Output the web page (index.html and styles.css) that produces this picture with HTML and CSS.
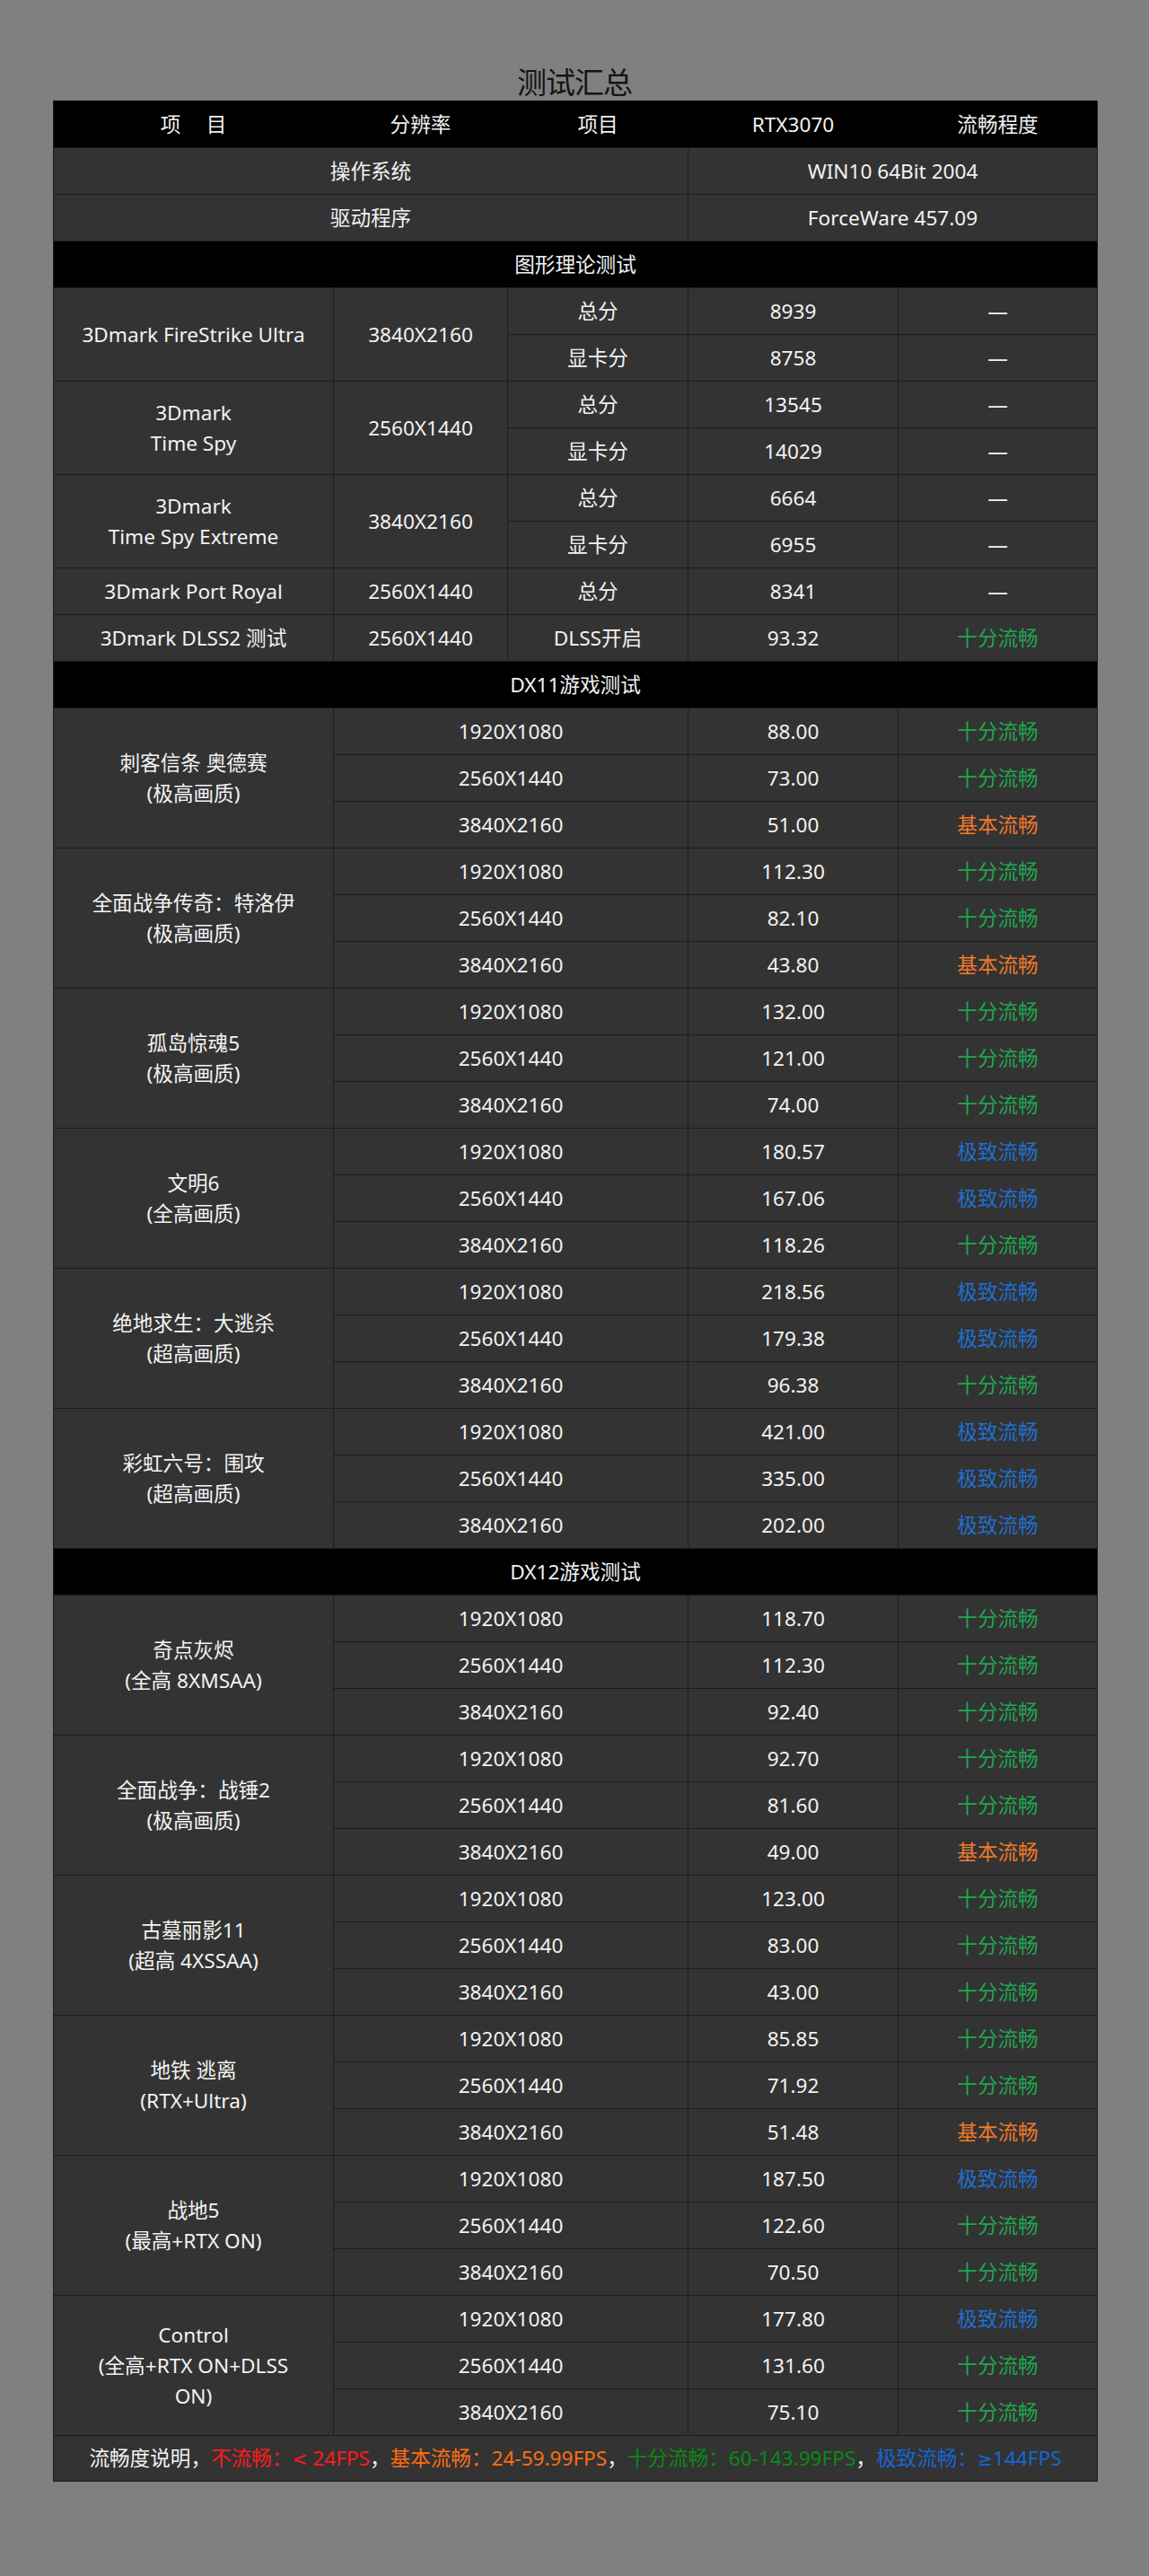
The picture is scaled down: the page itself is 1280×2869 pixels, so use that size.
FILE: index.html
```html
<!DOCTYPE html>
<html lang="zh-CN">
<head>
<meta charset="utf-8">
<title>测试汇总</title>
<link rel="stylesheet" href="styles.css">
</head>
<body>
<div class="page">
  <h1 class="title">测试汇总</h1>
  <table class="summary">
    <colgroup>
      <col class="c1"><col class="c2"><col class="c3"><col class="c4"><col class="c5">
    </colgroup>
    <tbody>
      <tr class="head"><td>项　 目</td><td>分辨率</td><td>项目</td><td>RTX3070</td><td>流畅程度</td></tr>
      <tr><td colspan="3">操作系统</td><td colspan="2">WIN10 64Bit 2004</td></tr>
      <tr><td colspan="3">驱动程序</td><td colspan="2">ForceWare 457.09</td></tr>
      <tr class="section"><td colspan="5">图形理论测试</td></tr>

      <tr><td rowspan="2">3Dmark FireStrike Ultra</td><td rowspan="2">3840X2160</td><td>总分</td><td>8939</td><td>—</td></tr>
      <tr><td>显卡分</td><td>8758</td><td>—</td></tr>
      <tr><td rowspan="2">3Dmark<br>Time Spy</td><td rowspan="2">2560X1440</td><td>总分</td><td>13545</td><td>—</td></tr>
      <tr><td>显卡分</td><td>14029</td><td>—</td></tr>
      <tr><td rowspan="2">3Dmark<br>Time Spy Extreme</td><td rowspan="2">3840X2160</td><td>总分</td><td>6664</td><td>—</td></tr>
      <tr><td>显卡分</td><td>6955</td><td>—</td></tr>
      <tr><td>3Dmark Port Royal</td><td>2560X1440</td><td>总分</td><td>8341</td><td>—</td></tr>
      <tr><td>3Dmark DLSS2 测试</td><td>2560X1440</td><td>DLSS开启</td><td>93.32</td><td class="good">十分流畅</td></tr>

      <tr class="section"><td colspan="5">DX11游戏测试</td></tr>

      <tr><td rowspan="3">刺客信条 奥德赛<br>(极高画质)</td><td colspan="2">1920X1080</td><td>88.00</td><td class="good">十分流畅</td></tr>
      <tr><td colspan="2">2560X1440</td><td>73.00</td><td class="good">十分流畅</td></tr>
      <tr><td colspan="2">3840X2160</td><td>51.00</td><td class="ok">基本流畅</td></tr>

      <tr><td rowspan="3">全面战争传奇：特洛伊<br>(极高画质)</td><td colspan="2">1920X1080</td><td>112.30</td><td class="good">十分流畅</td></tr>
      <tr><td colspan="2">2560X1440</td><td>82.10</td><td class="good">十分流畅</td></tr>
      <tr><td colspan="2">3840X2160</td><td>43.80</td><td class="ok">基本流畅</td></tr>

      <tr><td rowspan="3">孤岛惊魂5<br>(极高画质)</td><td colspan="2">1920X1080</td><td>132.00</td><td class="good">十分流畅</td></tr>
      <tr><td colspan="2">2560X1440</td><td>121.00</td><td class="good">十分流畅</td></tr>
      <tr><td colspan="2">3840X2160</td><td>74.00</td><td class="good">十分流畅</td></tr>

      <tr><td rowspan="3">文明6<br>(全高画质)</td><td colspan="2">1920X1080</td><td>180.57</td><td class="best">极致流畅</td></tr>
      <tr><td colspan="2">2560X1440</td><td>167.06</td><td class="best">极致流畅</td></tr>
      <tr><td colspan="2">3840X2160</td><td>118.26</td><td class="good">十分流畅</td></tr>

      <tr><td rowspan="3">绝地求生：大逃杀<br>(超高画质)</td><td colspan="2">1920X1080</td><td>218.56</td><td class="best">极致流畅</td></tr>
      <tr><td colspan="2">2560X1440</td><td>179.38</td><td class="best">极致流畅</td></tr>
      <tr><td colspan="2">3840X2160</td><td>96.38</td><td class="good">十分流畅</td></tr>

      <tr><td rowspan="3">彩虹六号：围攻<br>(超高画质)</td><td colspan="2">1920X1080</td><td>421.00</td><td class="best">极致流畅</td></tr>
      <tr><td colspan="2">2560X1440</td><td>335.00</td><td class="best">极致流畅</td></tr>
      <tr><td colspan="2">3840X2160</td><td>202.00</td><td class="best">极致流畅</td></tr>

      <tr class="section"><td colspan="5">DX12游戏测试</td></tr>

      <tr><td rowspan="3">奇点灰烬<br>(全高 8XMSAA)</td><td colspan="2">1920X1080</td><td>118.70</td><td class="good">十分流畅</td></tr>
      <tr><td colspan="2">2560X1440</td><td>112.30</td><td class="good">十分流畅</td></tr>
      <tr><td colspan="2">3840X2160</td><td>92.40</td><td class="good">十分流畅</td></tr>

      <tr><td rowspan="3">全面战争：战锤2<br>(极高画质)</td><td colspan="2">1920X1080</td><td>92.70</td><td class="good">十分流畅</td></tr>
      <tr><td colspan="2">2560X1440</td><td>81.60</td><td class="good">十分流畅</td></tr>
      <tr><td colspan="2">3840X2160</td><td>49.00</td><td class="ok">基本流畅</td></tr>

      <tr><td rowspan="3">古墓丽影11<br>(超高 4XSSAA)</td><td colspan="2">1920X1080</td><td>123.00</td><td class="good">十分流畅</td></tr>
      <tr><td colspan="2">2560X1440</td><td>83.00</td><td class="good">十分流畅</td></tr>
      <tr><td colspan="2">3840X2160</td><td>43.00</td><td class="good">十分流畅</td></tr>

      <tr><td rowspan="3">地铁 逃离<br>(RTX+Ultra)</td><td colspan="2">1920X1080</td><td>85.85</td><td class="good">十分流畅</td></tr>
      <tr><td colspan="2">2560X1440</td><td>71.92</td><td class="good">十分流畅</td></tr>
      <tr><td colspan="2">3840X2160</td><td>51.48</td><td class="ok">基本流畅</td></tr>

      <tr><td rowspan="3">战地5<br>(最高+RTX ON)</td><td colspan="2">1920X1080</td><td>187.50</td><td class="best">极致流畅</td></tr>
      <tr><td colspan="2">2560X1440</td><td>122.60</td><td class="good">十分流畅</td></tr>
      <tr><td colspan="2">3840X2160</td><td>70.50</td><td class="good">十分流畅</td></tr>

      <tr><td rowspan="3">Control<br>(全高+RTX ON+DLSS<br>ON)</td><td colspan="2">1920X1080</td><td>177.80</td><td class="best">极致流畅</td></tr>
      <tr><td colspan="2">2560X1440</td><td>131.60</td><td class="good">十分流畅</td></tr>
      <tr><td colspan="2">3840X2160</td><td>75.10</td><td class="good">十分流畅</td></tr>

      <tr class="legend"><td colspan="5">流畅度说明，<span class="l-red">不流畅：<span class="sym">&lt;</span> 24FPS</span>，<span class="l-orange">基本流畅：24-59.99FPS</span>，<span class="l-green">十分流畅：60-143.99FPS</span>，<span class="l-blue">极致流畅：<span class="sym">≥</span>144FPS</span></td></tr>
    </tbody>
  </table>
</div>
</body>
</html>
```

FILE: styles.css
```css
html, body {
  margin: 0;
  padding: 0;
  background: #808080;
}

body {
  font-family: "Noto Sans", "Noto Sans CJK SC", sans-serif;
  color: #f2f2f2;
}

.page {
  padding-top: 70px;
  padding-bottom: 105px;
}

.title {
  margin: 0;
  height: 42px;
  text-align: center;
  font-family: "Noto Sans CJK SC", sans-serif;
  font-weight: 400;
  font-size: 33px;
  line-height: 40px;
  color: #141414;
  letter-spacing: -1px;
}

.summary {
  margin-left: 59px;
  width: 1163px;
  border-collapse: collapse;
  table-layout: fixed;
  background: #333333;
  border: 1px solid #1c1c1c;
}

.c1 { width: 312px; }
.c2 { width: 194px; }
.c3 { width: 201px; }
.c4 { width: 234px; }
.c5 { width: 222px; }

.summary td {
  height: 51px;
  padding: 0 4px;
  border: 1px solid #1c1c1c;
  text-align: center;
  vertical-align: middle;
  font-size: 22.6px;
  line-height: 34px;
  white-space: nowrap;
}

.summary tr.head td,
.summary tr.section td {
  background: #000000;
  border-color: #000000;
  border-bottom-color: #1c1c1c;
}

.summary tr.head td:first-child,
.summary tr.section td:first-child {
  border-left-color: #1c1c1c;
}

.summary tr.head td:last-child,
.summary tr.section td:last-child {
  border-right-color: #1c1c1c;
}

.good { color: #1fa64f; }
.ok { color: #ef7a2a; }
.best { color: #1f6fcf; }

.summary tr.legend td {
  height: 50px;
  color: #f2f2f2;
  font-size: 22.6px;
}

.sym {
  font-family: "DejaVu Sans", sans-serif;
  font-size: 0.9em;
}

.l-red { color: #ff1a1a; }
.l-orange { color: #ff6d10; }
.l-green { color: #0a8a14; }
.l-blue { color: #1466d2; }
```
